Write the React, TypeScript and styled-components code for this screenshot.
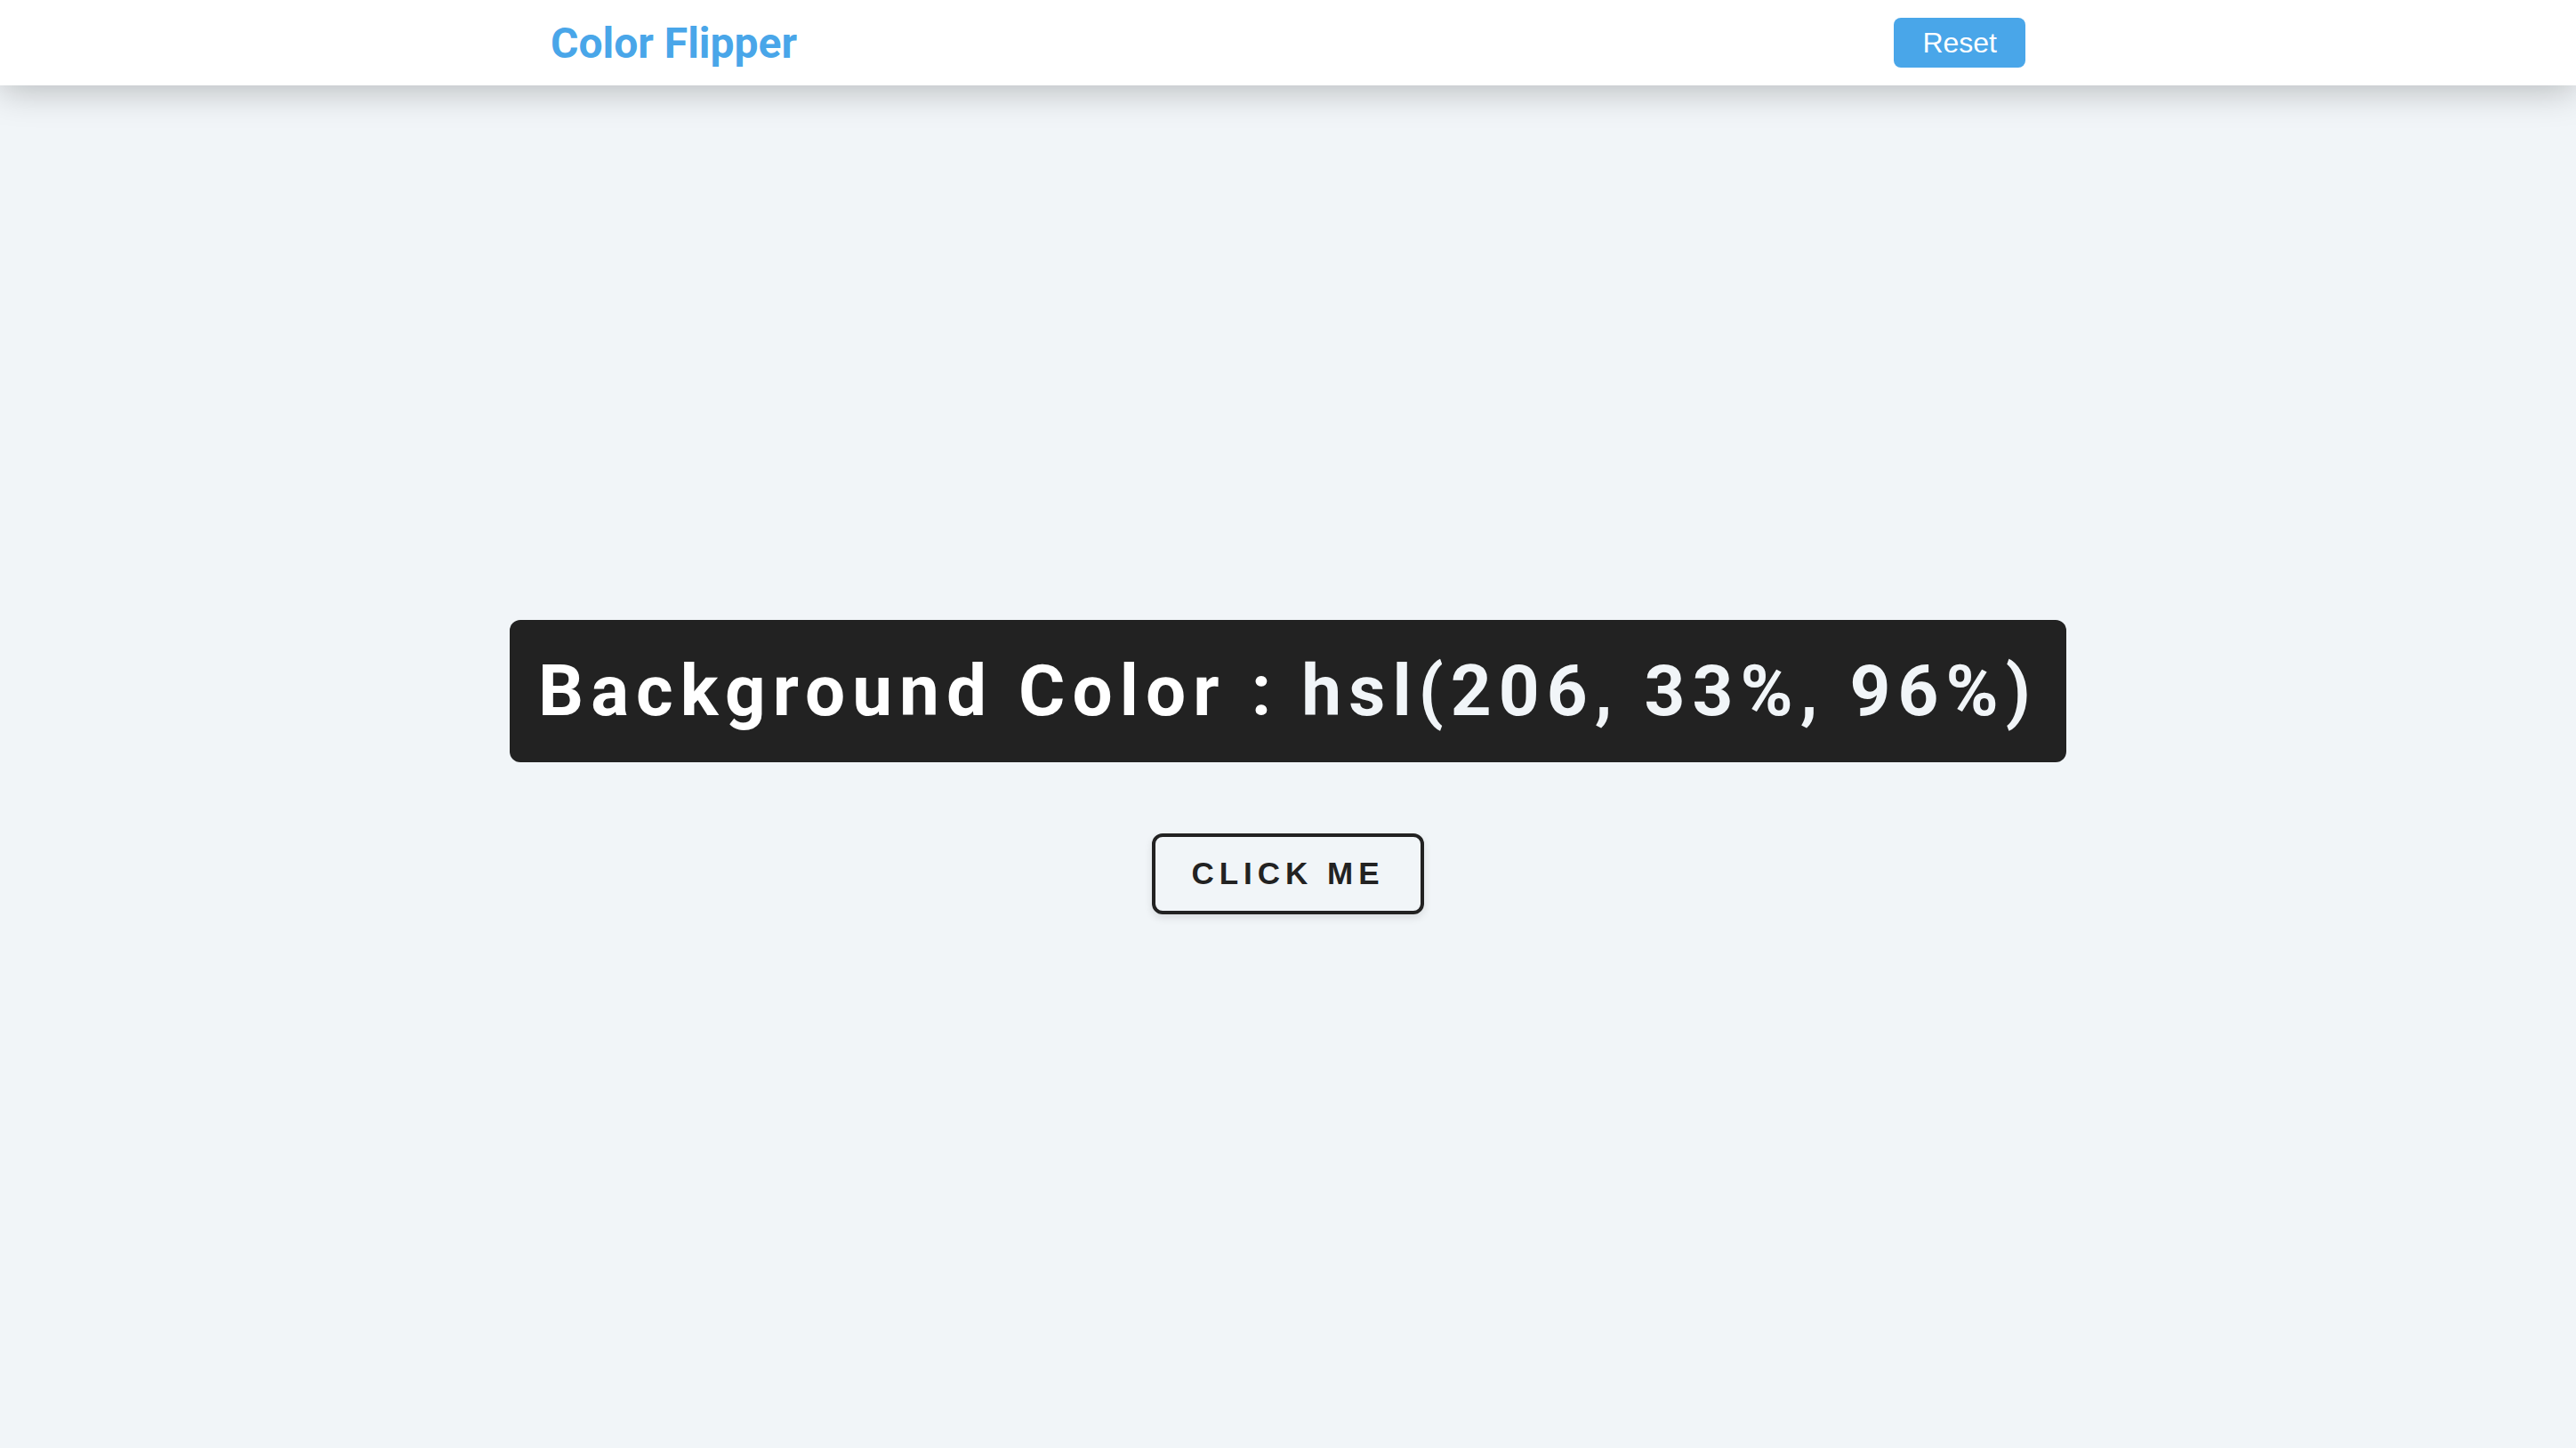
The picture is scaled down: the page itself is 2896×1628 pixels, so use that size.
import React, { useState } from "react";
import styled, { createGlobalStyle } from "styled-components";

const GlobalStyle = createGlobalStyle`
  * {
    box-sizing: border-box;
  }
  body {
    margin: 0;
    background: #f1f5f8;
    font-family: Roboto, "Liberation Sans", sans-serif;
  }
`;

const Page = styled.div<{ $bg: string }>`
  min-height: 100vh;
  display: flex;
  flex-direction: column;
  background: ${(p) => p.$bg};
`;

const Nav = styled.nav`
  height: 96px;
  background: #fff;
  box-shadow: 0 5px 40px rgba(0, 0, 0, 0.25);
  display: flex;
  justify-content: center;
  position: relative;
  z-index: 1;
`;

const NavCenter = styled.div`
  width: 1658px;
  display: flex;
  align-items: center;
  justify-content: space-between;
`;

const Logo = styled.h4`
  margin: 0;
  font-family: Roboto, sans-serif;
  font-size: 48px;
  font-weight: 700;
  color: #49a6e9;
`;

const ResetButton = styled.button`
  height: 56px;
  padding: 0 32px;
  border: none;
  border-radius: 8px;
  background: #49a6e9;
  color: #fff;
  font-family: "Liberation Sans", Arial, sans-serif;
  font-size: 32px;
  cursor: pointer;
`;

const Main = styled.main`
  flex: 1;
  display: flex;
  flex-direction: column;
  align-items: center;
  justify-content: center;
  gap: 80px;
`;

const Heading = styled.h2`
  margin: 0;
  height: 160px;
  padding: 0 32px;
  display: flex;
  align-items: center;
  background: #222;
  border-radius: 12px;
  color: #fff;
  font-family: Roboto, sans-serif;
  font-size: 80px;
  font-weight: 700;
  letter-spacing: 8.1px;
  white-space: nowrap;
`;

const ColorValue = styled.span<{ $color: string }>`
  color: ${(p) => p.$color};
  margin-left: 26px;
`;

const FlipButton = styled.button`
  width: 306px;
  height: 91px;
  background: transparent;
  border: 4px solid #222;
  border-radius: 12px;
  color: #222;
  font-family: "Liberation Sans", Arial, sans-serif;
  font-size: 35px;
  font-weight: 700;
  letter-spacing: 6px;
  text-transform: uppercase;
  box-shadow: 0 4px 10px rgba(0, 0, 0, 0.1);
  cursor: pointer;
`;

const START = "hsl(206, 33%, 96%)";

const App = () => {
  const [color, setColor] = useState(START);

  const flip = () => {
    const h = Math.floor(Math.random() * 360);
    const s = Math.floor(Math.random() * 100);
    const l = Math.floor(Math.random() * 100);
    setColor(`hsl(${h}, ${s}%, ${l}%)`);
  };

  return (
    <>
      <GlobalStyle />
      <Page $bg={color}>
        <Nav>
          <NavCenter>
            <Logo>Color Flipper</Logo>
            <ResetButton onClick={() => setColor(START)}>Reset</ResetButton>
          </NavCenter>
        </Nav>
        <Main>
          <Heading>
            Background Color :<ColorValue $color={color}>{color}</ColorValue>
          </Heading>
          <FlipButton onClick={flip}>click me</FlipButton>
        </Main>
      </Page>
    </>
  );
};

export default App;
